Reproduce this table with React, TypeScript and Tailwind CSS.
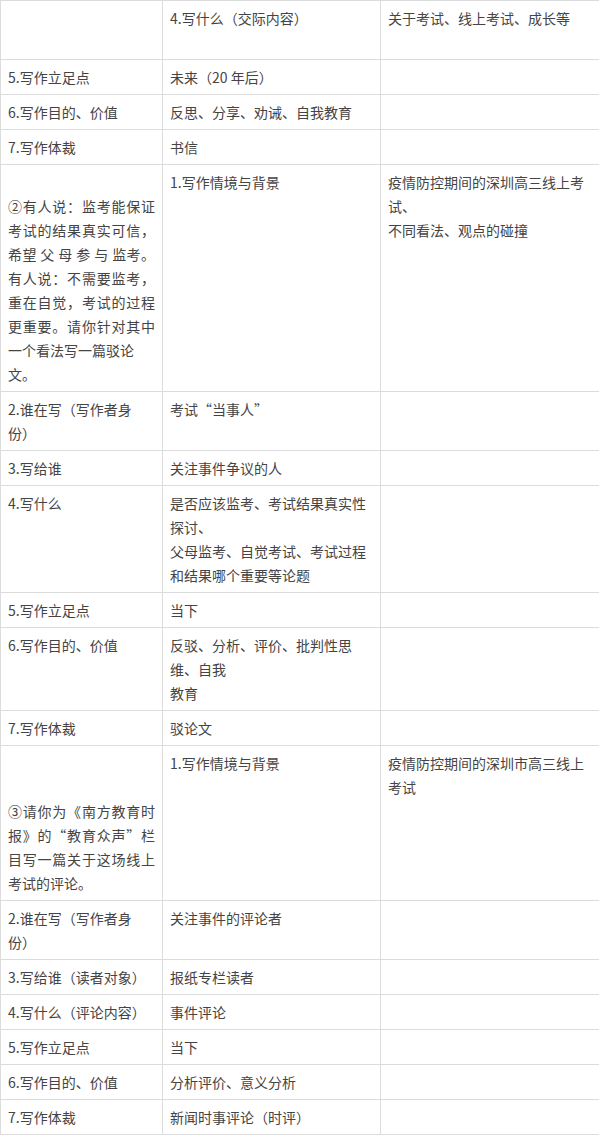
type Line = string | { t: string; j: true };
type Row = [Line[], Line[], Line[]];

const J = (t: string): Line => ({ t, j: true });

const rows: Row[] = [
  [[], ["4.写什么（交际内容）", ""], ["关于考试、线上考试、成长等"]],
  [["5.写作立足点"], ["未来（20 年后）"], []],
  [["6.写作目的、价值"], ["反思、分享、劝诫、自我教育"], []],
  [["7.写作体裁"], ["书信"], []],
  [
    [
      "",
      J("②有人说：监考能保证"),
      J("考试的结果真实可信，"),
      J("希望 父 母 参 与 监考。"),
      J("有人说：不需要监考，"),
      J("重在自觉，考试的过程"),
      J("更重要。请你针对其中"),
      "一个看法写一篇驳论",
      "文。",
    ],
    ["1.写作情境与背景"],
    ["疫情防控期间的深圳高三线上考", "试、", "不同看法、观点的碰撞"],
  ],
  [["2.谁在写（写作者身", "份）"], ["考试“当事人”"], []],
  [["3.写给谁"], ["关注事件争议的人"], []],
  [["4.写什么"], ["是否应该监考、考试结果真实性", "探讨、", "父母监考、自觉考试、考试过程", "和结果哪个重要等论题"], []],
  [["5.写作立足点"], ["当下"], []],
  [["6.写作目的、价值"], ["反驳、分析、评价、批判性思", "维、自我", "教育"], []],
  [["7.写作体裁"], ["驳论文"], []],
  [
    ["", "", J("③请你为《南方教育时"), J("报》的“教育众声”栏"), J("目写一篇关于这场线上"), "考试的评论。"],
    ["1.写作情境与背景"],
    ["疫情防控期间的深圳市高三线上", "考试"],
  ],
  [["2.谁在写（写作者身", "份）"], ["关注事件的评论者"], []],
  [["3.写给谁（读者对象）"], ["报纸专栏读者"], []],
  [["4.写什么（评论内容）"], ["事件评论"], []],
  [["5.写作立足点"], ["当下"], []],
  [["6.写作目的、价值"], ["分析评价、意义分析"], []],
  [["7.写作体裁"], ["新闻时事评论（时评）"], []],
];

function Cell({ lines }: { lines: Line[] }) {
  return (
    <td className="border border-[#dcdcdc] px-[7px] py-[5px] align-top">
      {lines.map((l, i) =>
        typeof l === "string" ? (
          <div key={i} className="h-6 whitespace-nowrap">
            {l}
          </div>
        ) : (
          <div key={i} className="h-6 whitespace-nowrap text-justify [text-align-last:justify]">
            {l.t}
          </div>
        )
      )}
    </td>
  );
}

export default function App() {
  return (
    <div
      className="w-[599px] bg-white text-[14px] leading-6 text-[#444444]"
      style={{ fontFamily: '"Noto Sans CJK SC", "Noto Sans", sans-serif' }}
    >
      <table className="w-[599px] table-fixed border-collapse">
        <colgroup>
          <col className="w-[162px]" />
          <col className="w-[218px]" />
          <col className="w-[219px]" />
        </colgroup>
        <tbody>
          {rows.map((r, i) => (
            <tr key={i}>
              <Cell lines={r[0]} />
              <Cell lines={r[1]} />
              <Cell lines={r[2]} />
            </tr>
          ))}
        </tbody>
      </table>
    </div>
  );
}
